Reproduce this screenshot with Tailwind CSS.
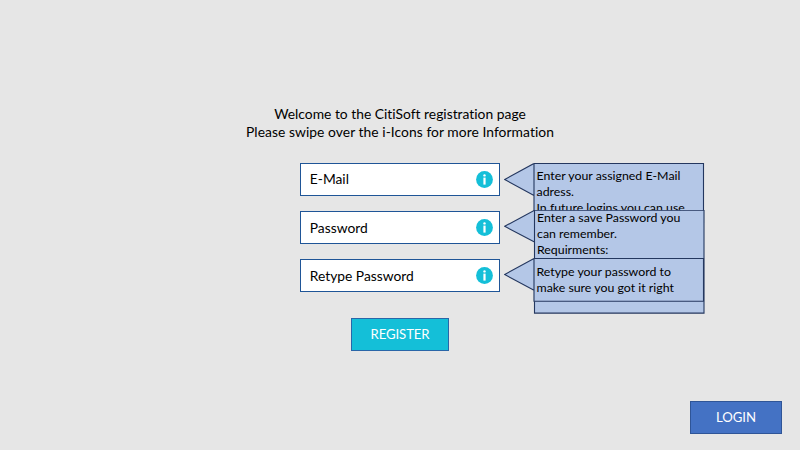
<!DOCTYPE html>
<html lang="en">
<head>
<meta charset="utf-8">
<title>CitiSoft registration</title>
<script src="https://cdn.jsdelivr.net/npm/@tailwindcss/browser@4"></script>
</head>
<body class="w-[800px] h-[450px] overflow-hidden bg-[#e6e6e6] font-['Lato',sans-serif] text-black flex flex-col pt-[105px] [font-variant-ligatures:none]">
<header class="text-center text-[13.85px] leading-[18px]">
  <h1><span class="whitespace-nowrap">Welcome to the CitiSoft registration page</span></h1>
  <p><span class="whitespace-nowrap tracking-[0.05px]">Please swipe over the i-Icons for more Information</span></p>
</header>
<main class="relative mt-[21.5px] ml-[300px] w-[200px] flex flex-col gap-[15px] text-[13.8px]">
  <div class="h-[33.3px] w-[200px] flex items-center justify-between border border-[#1f5597] bg-white pl-[8.8px] pr-[6.5px]">
    <label class="whitespace-nowrap">E-Mail</label>
    <svg class="size-[17px]" viewBox="0 0 17 17"><circle cx="8.5" cy="8.5" r="8.4" fill="#14bfd8"/><circle cx="8.5" cy="4.4" r="1.2" fill="#fff"/><rect x="7.4" y="6.6" width="2.2" height="7" fill="#fff"/></svg>
  </div>
  <div class="h-[33.3px] w-[200px] flex items-center justify-between border border-[#1f5597] bg-white pl-[8.8px] pr-[6.5px]">
    <label class="whitespace-nowrap relative top-[0.5px]">Password</label>
    <svg class="size-[17px]" viewBox="0 0 17 17"><circle cx="8.5" cy="8.5" r="8.4" fill="#14bfd8"/><circle cx="8.5" cy="4.4" r="1.2" fill="#fff"/><rect x="7.4" y="6.6" width="2.2" height="7" fill="#fff"/></svg>
  </div>
  <div class="h-[33.3px] w-[200px] flex items-center justify-between border border-[#1f5597] bg-white pl-[8.8px] pr-[6.5px]">
    <label class="whitespace-nowrap relative top-[0.5px]">Retype Password</label>
    <svg class="size-[17px]" viewBox="0 0 17 17"><circle cx="8.5" cy="8.5" r="8.4" fill="#14bfd8"/><circle cx="8.5" cy="4.4" r="1.2" fill="#fff"/><rect x="7.4" y="6.6" width="2.2" height="7" fill="#fff"/></svg>
  </div>

  <aside class="absolute left-[204px] top-0 w-[201px] h-[60px] text-[12.35px] leading-[16px]">
    <svg class="absolute inset-0" width="201" height="60"><path d="M30 .4H199.5V60H30Z M30 .4L.7 16.5L30 32.5" fill="#b4c7e7" stroke="#24375f" stroke-width="1.1"/></svg>
    <p class="relative pl-[32.5px] pt-[5px] whitespace-nowrap"><span class="block">Enter your assigned E-Mail</span><span class="block">adress.</span><span class="block">In future logins you can use</span></p>
  </aside>
  <aside class="absolute left-[204px] top-[47px] w-[201px] h-[104px] text-[12.35px] leading-[16px]">
    <svg class="absolute inset-0" width="201" height="104"><path d="M30.5 .3H200V103.1H30.5Z M30.5 .3L.7 16.3L30.5 32" fill="#b4c7e7" stroke="#24375f" stroke-width="1.1"/></svg>
    <p class="relative pl-[33px] whitespace-nowrap"><span class="block">Enter a save Password you</span><span class="block">can remember.</span><span class="block">Requirments:</span></p>
  </aside>
  <aside class="absolute left-[204px] top-[95px] w-[201px] h-[45px] text-[12.35px] leading-[16px]">
    <svg class="absolute inset-0" width="201" height="45"><path d="M30 .5H199.5V43.3H30Z M30 .5L.7 16.5L30 32.3" fill="#b4c7e7" stroke="#24375f" stroke-width="1.1"/></svg>
    <p class="relative pl-[32.5px] pt-[6px] whitespace-nowrap"><span class="block">Retype your password to</span><span class="block">make sure you got it right</span></p>
  </aside>
</main>
<button class="mt-[25.2px] ml-[351px] w-[98px] h-[33.5px] shrink-0 border border-[#2a66a8] bg-[#14bfd8] text-white text-[13.2px] tracking-[-0.1px] pt-[1px]">REGISTER</button>
<button class="mt-[49.5px] ml-[690px] w-[92px] h-[33.5px] shrink-0 border border-[#2f5597] bg-[#4472c4] text-white text-[13.2px] tracking-[-0.1px] pt-[1px]">LOGIN</button>
</body>
</html>
